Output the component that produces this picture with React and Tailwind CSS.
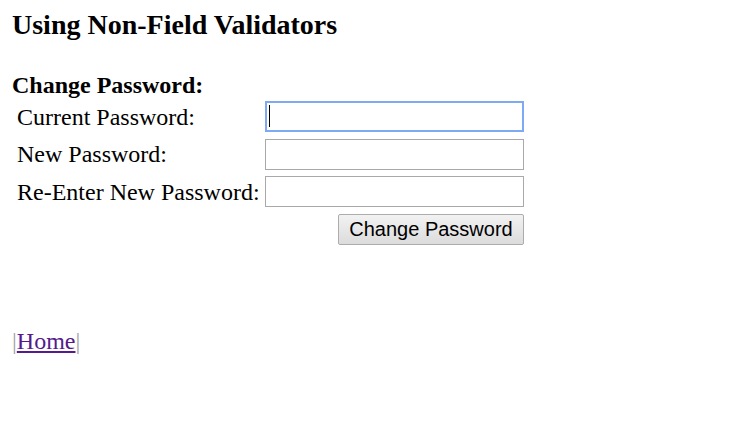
import React from 'react';

const serif = "font-['Liberation_Serif','Times_New_Roman',serif]";

function Field({ label, focused }) {
  return (
    <>
      <label className="text-[24px] leading-[28px] text-black whitespace-nowrap">{label}</label>
      <div className="relative w-[259px] h-[31px]">
        <input
          type="password"
          className={
            focused
              ? 'w-full h-full bg-white border-2 border-[#7eaaf3] outline-none px-1'
              : 'w-full h-full bg-white border border-[#a9a9a9] outline-none px-1'
          }
        />
        {focused && <span className="absolute left-[4px] top-[4px] w-[1px] h-[22px] bg-black" />}
      </div>
    </>
  );
}

export default function App() {
  return (
    <div className={`${serif} bg-white w-[749px] h-[447px] text-black pl-[12px] pt-[8px]`}>
      <h2 className="text-[28px] leading-[34px] font-bold">Using Non-Field Validators</h2>
      <h3 className="mt-[29px] text-[24px] leading-[28px] font-bold">Change Password:</h3>
      <div className="mt-[2px] ml-[5px] grid grid-cols-[248px_259px] gap-y-[6.5px] items-center">
        <Field label="Current Password:" focused />
        <Field label="New Password:" />
        <Field label="Re-Enter New Password:" />
        <div />
        <div className="flex justify-end">
          <button className="font-['Liberation_Sans',Arial,sans-serif] text-[20px] leading-[22px] h-[31px] w-[186px] border border-[#acacac] rounded-[2px] bg-gradient-to-b from-[#f2f2f2] to-[#dcdcdc] text-black">
            Change Password
          </button>
        </div>
      </div>
      <div className="mt-[82px] text-[24px] leading-[28px]">
        <span className="text-[#a0a0a0]">|</span>
        <a href="#" className="text-[#551a8b] underline">Home</a>
        <span className="text-[#a0a0a0]">|</span>
      </div>
    </div>
  );
}
